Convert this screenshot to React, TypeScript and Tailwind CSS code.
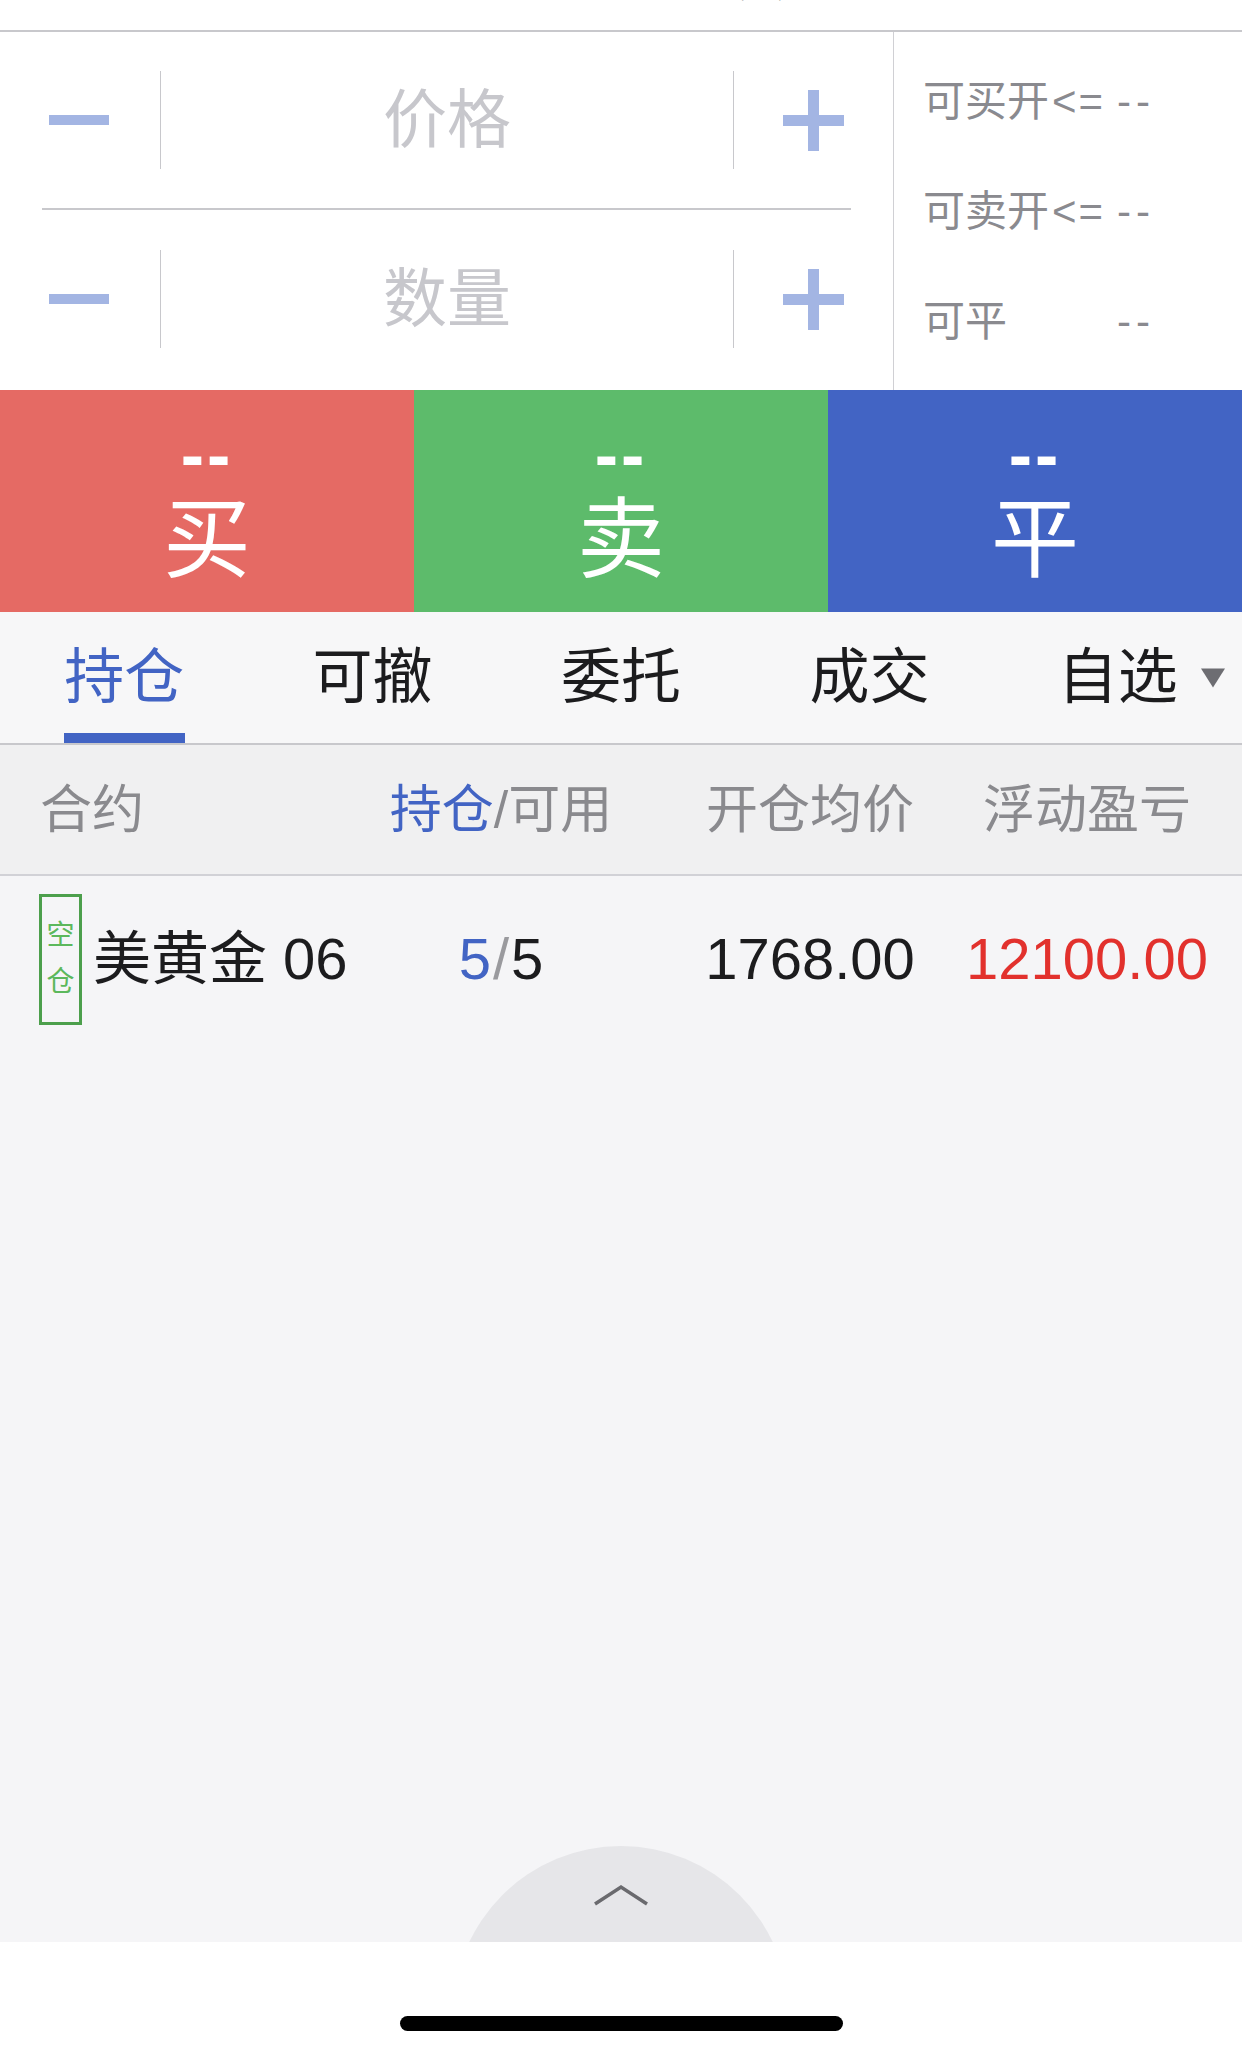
import React from 'react';

const tabs = ['持仓', '可撤', '委托', '成交', '自选'];

function Minus() {
  return <div className="w-[60px] h-[10px] bg-[#a3b5e3]" />;
}

function Plus() {
  return (
    <div className="relative w-[61px] h-[61px]">
      <div className="absolute left-0 top-[25px] w-[61px] h-[11px] bg-[#a3b5e3]" />
      <div className="absolute top-0 left-[25px] w-[11px] h-[61px] bg-[#a3b5e3]" />
    </div>
  );
}

function InputRow({ label, bordered }: { label: string; bordered?: boolean }) {
  return (
    <div className={`flex items-center h-[178px] ${bordered ? 'border-b-2 border-[#c8c8cc]' : ''}`}>
      <div className="w-[118px] pl-[7px] flex items-center">
        <Minus />
      </div>
      <div className="w-px h-[98px] bg-[#c8c8cc]" />
      <div className="flex-1 flex justify-center text-[64px] leading-none text-[#c7c7cc]">{label}</div>
      <div className="w-px h-[98px] bg-[#c8c8cc]" />
      <div className="w-[117px] pl-[49px] flex items-center">
        <Plus />
      </div>
    </div>
  );
}

function SideRow({ label, op }: { label: string; op?: boolean }) {
  return (
    <div className="h-[110px] flex items-center text-[42px] leading-none text-[#8a8a8f]">
      <span className="w-[194px] whitespace-nowrap">
        {label}
        {op && <span className="ml-[3px] tracking-[2px]">&lt;=</span>}
      </span>
      <span className="tracking-[5px]">--</span>
    </div>
  );
}

function ActionButton({ label, color }: { label: string; color: string }) {
  return (
    <div className={`flex-1 flex flex-col items-center pt-[30px] text-white ${color}`}>
      <span className="text-[70px] leading-none font-bold tracking-[3px]">--</span>
      <span className="mt-[6px] text-[88px] leading-none">{label}</span>
    </div>
  );
}

export default function App() {
  return (
    <div className="w-[1242px] h-[2054px] flex flex-col bg-white overflow-hidden font-['Liberation_Sans','Noto_Sans_CJK_SC',sans-serif]">
      {/* top title (cut off) */}
      <div className="h-[32px] shrink-0 overflow-hidden border-b-2 border-[#c8c8cc] flex justify-center pl-[280px]">
        <span className="text-[48px] leading-[48px] mt-[-44px] text-[#555]">货</span>
      </div>

      {/* price / quantity inputs */}
      <div className="h-[358px] shrink-0 flex">
        <div className="w-[893px] px-[42px] flex flex-col">
          <InputRow label="价格" bordered />
          <InputRow label="数量" />
        </div>
        <div className="flex-1 border-l border-[#d0d0d4] pl-[29px] pt-[15px] flex flex-col">
          <SideRow label="可买开" op />
          <SideRow label="可卖开" op />
          <SideRow label="可平" />
        </div>
      </div>

      {/* buy / sell / close */}
      <div className="h-[222px] shrink-0 flex">
        <ActionButton label="买" color="bg-[#e56a64]" />
        <ActionButton label="卖" color="bg-[#5dbb6b]" />
        <ActionButton label="平" color="bg-[#4264c4]" />
      </div>

      {/* tabs */}
      <div className="h-[133px] shrink-0 grid grid-cols-5 bg-[#f7f7f8] border-b-2 border-[#c8c8cc]">
        {tabs.map((t, i) => (
          <div key={t} className="relative flex items-center justify-center">
            <span className={`relative text-[60px] leading-none ${i === 0 ? 'text-[#4264c4]' : 'text-[#1c1c1e]'}`}>
              {t}
              {i === 4 && (
                <span className="absolute left-[calc(100%+23px)] top-1/2 -translate-y-1/2 w-0 h-0 border-l-[12px] border-r-[12px] border-t-[19px] border-l-transparent border-r-transparent border-t-[#6d6d72]" />
              )}
            </span>
            {i === 0 && <div className="absolute bottom-0 left-[64px] w-[121px] h-[10px] bg-[#4264c4]" />}
          </div>
        ))}
      </div>

      {/* table header */}
      <div className="h-[131px] shrink-0 grid grid-cols-[376px_250px_368px_186px] items-center bg-[#f0f0f1] border-b-2 border-[#d1d1d6] text-[52px] leading-none text-[#8a8a8e]">
        <div className="pl-[40px]">合约</div>
        <div className="flex justify-center whitespace-nowrap">
          <span className="text-[#4264c4]">持仓</span>/可用
        </div>
        <div className="flex justify-center whitespace-nowrap">开仓均价</div>
        <div className="flex justify-center whitespace-nowrap">浮动盈亏</div>
      </div>

      {/* position row */}
      <div className="h-[166px] shrink-0 grid grid-cols-[376px_250px_368px_186px] items-center bg-[#f5f5f7] text-[58px] leading-none text-[#1c1c1e]">
        <div className="pl-[39px] flex items-center">
          <div className="w-[43px] h-[131px] border-[3px] border-[#4c9f4c] flex flex-col items-center justify-center gap-[18px] text-[28px] leading-none text-[#5cb85c]">
            <span>空</span>
            <span>仓</span>
          </div>
          <span className="ml-[11px] whitespace-nowrap">
            美黄金<span className="ml-[16px]">06</span>
          </span>
        </div>
        <div className="flex justify-center whitespace-nowrap">
          <span className="text-[#4264c4]">5</span>
          <span className="text-[#9a9a9e] mx-[2px]">/</span>
          <span>5</span>
        </div>
        <div className="flex justify-center whitespace-nowrap">1768.00</div>
        <div className="flex justify-center whitespace-nowrap text-[#e2312d]">12100.00</div>
      </div>

      {/* empty list area with pull-up handle */}
      <div className="flex-1 flex flex-col justify-end items-center bg-[#f5f5f7]">
        <div className="w-[336px] h-[96px] overflow-hidden">
          <div className="w-[336px] h-[336px] rounded-full bg-[#e6e6e9] flex justify-center pt-[37px]">
            <svg width="58" height="24" viewBox="0 0 58 24">
              <polyline points="3,21 29,4 55,21" fill="none" stroke="#6a6a6e" strokeWidth="3.5" />
            </svg>
          </div>
        </div>
      </div>

      {/* home indicator */}
      <div className="h-[112px] shrink-0 bg-white flex justify-center pt-[74px]">
        <div className="w-[443px] h-[15px] rounded-full bg-black" />
      </div>
    </div>
  );
}
